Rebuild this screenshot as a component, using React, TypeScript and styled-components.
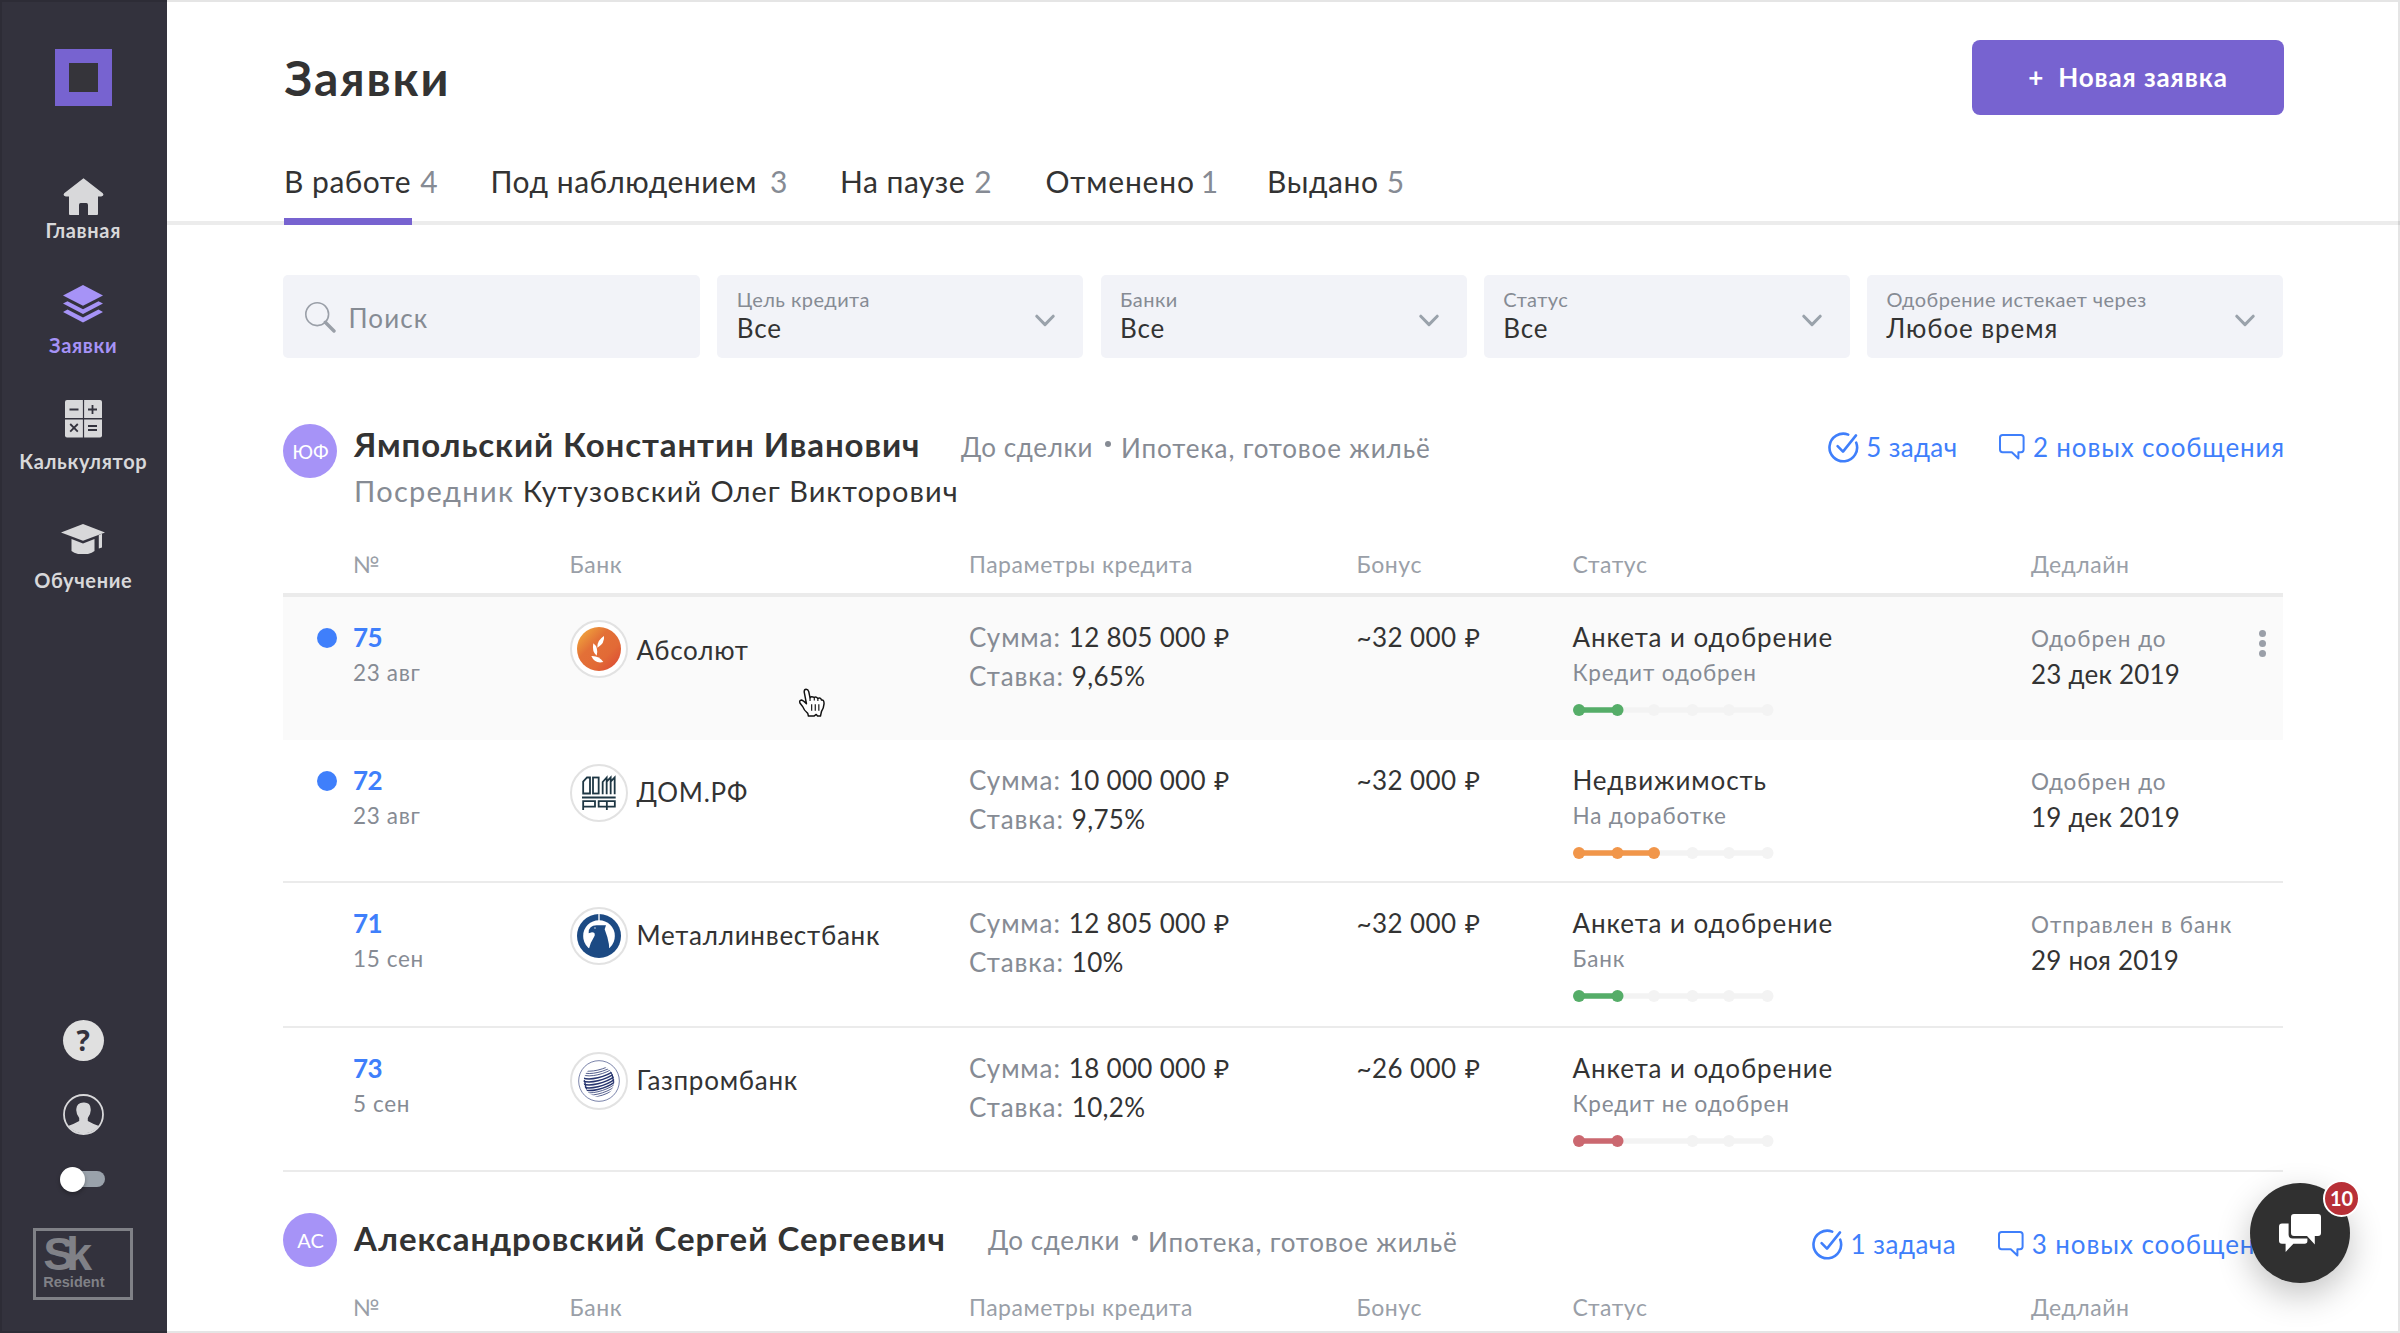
import React from "react";
import styled, { createGlobalStyle } from "styled-components";

const color = {
  ink: "#333333",
  muted: "#868b94",
  faint: "#9a9fa8",
  line: "#ebebeb",
  field: "#f2f3f8",
  violet: "#7763d0",
  lilac: "#a693f7",
  blue: "#3f7ffb",
  side: "#33323d",
  sideIcon: "#d8d8da",
};

const GlobalStyle = createGlobalStyle`
  *, *::before, *::after { box-sizing: border-box; }
  html, body { margin: 0; padding: 0; }
  body {
    background: #fff;
    color: ${color.ink};
    font-family: Lato, "Open Sans", "Noto Sans", sans-serif;
    overflow: hidden;
  }
  svg { display: block; flex: none; }
`;

const Page = styled.div`
  position: relative;
  display: flex;
  width: 2400px;
  height: 1333px;
  overflow: hidden;
  background: #fff;
`;

const Frame = styled.div`
  position: absolute;
  inset: 0;
  border: 2px solid rgba(0, 0, 0, 0.1);
  pointer-events: none;
`;

/* ---------- Sidebar ---------- */

const Sidebar = styled.nav`
  display: flex;
  flex-direction: column;
  align-items: center;
  flex: none;
  width: 166.5px;
  padding: 49px 0 33.5px;
  background: ${color.side};
`;

const Logo = styled.div`
  width: 57px;
  height: 57px;
  border: 14px solid ${color.violet};
  background: #35343a;
  margin-bottom: 28.5px;
`;

const NavItem = styled.a<{ $active?: boolean; $top: number; $gap: number }>`
  display: flex;
  flex-direction: column;
  align-items: center;
  gap: ${(p) => p.$gap}px;
  padding-top: ${(p) => p.$top}px;
  color: ${(p) => (p.$active ? color.lilac : color.sideIcon)};
  font-size: 20px;
  font-weight: 700;
  line-height: 24px;
  letter-spacing: 0.65px;
`;

const SideTools = styled.div`
  display: flex;
  flex-direction: column;
  align-items: center;
  margin-top: auto;
`;

const Help = styled.div`
  display: flex;
  align-items: center;
  justify-content: center;
  width: 41px;
  height: 41px;
  border-radius: 50%;
  background: #e0e0e0;
  color: ${color.side};
  font-family: "Open Sans", sans-serif;
  font-size: 28px;
  font-weight: 700;
  line-height: 41px;
  margin-bottom: 33px;
`;

const Switch = styled.div`
  display: flex;
  align-items: center;
  width: 43px;
  height: 16px;
  margin: 36px -1px 41px 0;
  border-radius: 8px;
  background: #9aa2ab;
`;

const Knob = styled.div`
  flex: none;
  width: 25px;
  height: 25px;
  margin-left: -2px;
  border-radius: 50%;
  background: #fff;
  box-shadow: 0 2px 4px rgba(0, 0, 0, 0.3);
`;

const Resident = styled.div`
  display: flex;
  flex-direction: column;
  width: 100px;
  height: 71.5px;
  padding: 5px 0 0 7px;
  border: 3px solid #808187;
  color: #808187;
  font-family: "Liberation Sans", Arial, sans-serif;
  font-weight: 700;
`;

const ResidentMark = styled.span`
  font-size: 47px;
  line-height: 36px;
  letter-spacing: -8.5px;
`;

const ResidentText = styled.span`
  font-size: 14.5px;
  line-height: 17px;
  margin-top: 2px;
`;

/* ---------- Header ---------- */

const Main = styled.main`
  flex: 1;
  min-width: 0;
`;

const Header = styled.header`
  height: 225px;
  padding: 39.5px 116.5px 0 117px;
  border-bottom: 4px solid #ececec;
`;

const TitleRow = styled.div`
  display: flex;
  justify-content: space-between;
  align-items: flex-start;
  height: 75.5px;
`;

const Title = styled.h1`
  margin: 8px 0 0 1px;
  font-size: 48px;
  font-weight: 700;
  line-height: 60px;
  letter-spacing: 1.9px;
`;

const NewButton = styled.button`
  display: flex;
  align-items: center;
  justify-content: center;
  gap: 14px;
  width: 312px;
  height: 75.5px;
  padding: 0 0 1px 1px;
  border: 0;
  border-radius: 8px;
  background: ${color.violet};
  color: #fff;
  font-family: inherit;
  font-size: 26px;
  font-weight: 700;
  line-height: 32px;
  letter-spacing: 0.9px;
`;

const Tabs = styled.div`
  display: flex;
  margin-top: 48px;
`;

const Tab = styled.a<{ $width: number }>`
  flex: none;
  width: ${(p) => p.$width}px;
  font-size: 30px;
  line-height: 36px;
  white-space: nowrap;
`;

const TabName = styled.span<{ $ls: number }>`
  padding-left: 0.5px;
  letter-spacing: ${(p) => p.$ls}px;
`;

const TabCount = styled.span<{ $gap: number }>`
  margin-left: ${(p) => p.$gap}px;
  color: ${color.muted};
`;

const TabBar = styled.div`
  width: 128px;
  height: 7px;
  margin-top: 19px;
  background: ${color.violet};
`;

/* ---------- Filters ---------- */

const Content = styled.div`
  padding: 50px 117px 0 116.5px;
`;

const Filters = styled.div`
  display: grid;
  grid-template-columns: 417px 366px 366px 366px 1fr;
  column-gap: 17.25px;
`;

const Field = styled.div`
  display: flex;
  align-items: flex-start;
  height: 83px;
  border-radius: 5px;
  background: ${color.field};
`;

const SearchField = styled(Field)`
  gap: 13px;
  padding: 27px 0 0 21.5px;
  color: ${color.muted};
  font-size: 26px;
  line-height: 32px;
  letter-spacing: 1.1px;
`;

const SelectField = styled(Field)`
  justify-content: space-between;
  padding: 12px 28px 0 19.5px;
`;

const SelectLabel = styled.div`
  color: ${color.muted};
  font-size: 20px;
  line-height: 24px;
  letter-spacing: 0.45px;
`;

const SelectValue = styled.div`
  margin-top: 2px;
  font-size: 26px;
  line-height: 31px;
  letter-spacing: 0.9px;
`;

const ChevronBox = styled.div`
  padding-top: 27px;
`;

/* ---------- Client group ---------- */

const Group = styled.section<{ $top: number }>`
  margin-top: ${(p) => p.$top}px;
`;

const GroupHead = styled.div<{ $height: number }>`
  display: flex;
  align-items: flex-start;
  height: ${(p) => p.$height}px;
  white-space: nowrap;
`;

const Avatar = styled.div<{ $top: number }>`
  display: flex;
  align-items: center;
  justify-content: center;
  flex: none;
  width: 54px;
  height: 54px;
  margin: ${(p) => p.$top}px 17px 0 0;
  padding: 0 0 1px 1px;
  border-radius: 50%;
  background: ${color.lilac};
  color: #fff;
  font-size: 20px;
`;

const Person = styled.div<{ $top: number; $width: number }>`
  width: ${(p) => p.$width}px;
  margin-top: ${(p) => p.$top}px;
`;

const PersonName = styled.div<{ $ls: number }>`
  font-size: 33px;
  font-weight: 700;
  line-height: 40px;
  letter-spacing: ${(p) => p.$ls}px;
`;

const Agent = styled.div`
  margin-top: 9px;
  font-size: 29px;
  line-height: 36px;
  letter-spacing: 1px;
`;

const AgentRole = styled.span`
  color: ${color.muted};
  letter-spacing: 1.3px;
`;

const Meta = styled.div<{ $top: number; $ls: number }>`
  margin-top: ${(p) => p.$top}px;
  color: ${color.muted};
  font-size: 26px;
  line-height: 32px;
  letter-spacing: ${(p) => p.$ls}px;
`;

const Bullet = styled.div<{ $top: number }>`
  width: 6px;
  height: 6px;
  margin: ${(p) => p.$top}px 10px 0 12px;
  border-radius: 50%;
  background: ${color.muted};
`;

const Links = styled.div<{ $top: number }>`
  display: flex;
  align-items: flex-start;
  gap: 41.5px;
  margin: ${(p) => p.$top}px -2px 0 auto;
`;

const LinkItem = styled.a<{ $ls: number; $gap: number }>`
  display: flex;
  align-items: center;
  gap: ${(p) => p.$gap}px;
  color: ${color.blue};
  font-size: 26px;
  line-height: 32px;
  letter-spacing: ${(p) => p.$ls}px;
`;

/* ---------- Table ---------- */

const columns = "70px 216.5px 399.5px 387.5px 216px 458.5px 1fr";

const HeadRow = styled.div`
  display: grid;
  grid-template-columns: ${columns};
  height: 48px;
  border-bottom: 4px solid ${color.line};
  color: ${color.faint};
  font-size: 23px;
  line-height: 31px;
  letter-spacing: 0.55px;
`;

const Row = styled.div<{ $hover?: boolean; $height: number }>`
  display: grid;
  grid-template-columns: ${columns};
  height: ${(p) => p.$height}px;
  padding-top: 24px;
  border-bottom: ${(p) => (p.$hover ? "0" : `2px solid ${color.line}`)};
  background: ${(p) => (p.$hover ? "#fafafa" : "#fff")};
  white-space: nowrap;
`;

const Unread = styled.div`
  width: 20px;
  height: 20px;
  margin: 7px 0 0 33.5px;
  border-radius: 50%;
  background: ${color.blue};
`;

const Primary = styled.div<{ $ls?: number; $top?: number }>`
  margin-top: ${(p) => p.$top ?? 0}px;
  font-size: 26px;
  line-height: 32px;
  letter-spacing: ${(p) => p.$ls ?? 0.9}px;
`;

const Secondary = styled.div<{ $top?: number; $ls?: number }>`
  margin-top: ${(p) => p.$top ?? 4.5}px;
  color: ${color.muted};
  font-size: 22.5px;
  line-height: 30px;
  letter-spacing: ${(p) => p.$ls ?? 0.85}px;
`;

const Num = styled(Primary)`
  color: ${color.blue};
  font-weight: 700;
  letter-spacing: -0.5px;
`;

const Param = styled(Primary)`
  display: flex;
  gap: 8px;
  margin-bottom: 6.5px;
`;

const ParamLabel = styled.span`
  color: ${color.muted};
`;

const ParamValue = styled.span`
  letter-spacing: 0.3px;
`;

const Ruble = styled.span`
  margin-left: 1.5px;
`;

const Bank = styled.div`
  display: flex;
  align-items: flex-start;
  gap: 9px;
`;

const BankLogo = styled.div<{ $top: number }>`
  flex: none;
  width: 58px;
  height: 58px;
  margin-top: ${(p) => p.$top}px;
  border: 2px solid #e2e2e2;
  border-radius: 50%;
  background: #fff;
`;

const Progress = styled.div`
  margin-top: 16px;
`;

const Deadline = styled.div`
  display: flex;
  justify-content: space-between;
  align-items: flex-start;
`;

const Kebab = styled.div`
  display: flex;
  flex-direction: column;
  gap: 3px;
  margin: 8.5px 17.5px 0 0;
`;

const KebabDot = styled.div`
  width: 7px;
  height: 7px;
  border-radius: 50%;
  background: ${color.faint};
`;

/* ---------- Floating parts ---------- */

const ChatButton = styled.div`
  position: absolute;
  left: 2250px;
  top: 1183px;
  display: flex;
  align-items: center;
  justify-content: center;
  width: 100px;
  height: 100px;
  border-radius: 50%;
  background: #303030;
  box-shadow: 0 12px 34px rgba(0, 0, 0, 0.24);
`;

const ChatBadge = styled.div`
  position: absolute;
  top: -3.5px;
  right: -10px;
  display: flex;
  align-items: center;
  justify-content: center;
  width: 37px;
  height: 37px;
  border: 2px solid #fff;
  border-radius: 50%;
  background: #b83037;
  color: #fff;
  font-size: 20px;
  font-weight: 700;
`;

const Pointer = styled.div`
  position: absolute;
  left: 798px;
  top: 688px;
`;

/* ---------- Icons ---------- */

const HomeIcon = () => (
  <svg width="41" height="37.5" viewBox="0 0 41 37.5" fill="currentColor">
    <path d="M20.5 0.3 39.8 15.2Q41.6 18 38.2 18.4H35V35.6Q35 37.5 33 37.5H25V27Q25 25 23.4 25H17.6Q16 25 16 27V37.5H8Q6 37.5 6 35.6V18.4H2.8Q-.6 18 1.2 15.2Z" />
  </svg>
);

const LayersIcon = () => (
  <svg width="40" height="37.5" viewBox="0 0 40 37.5" fill="currentColor">
    <path d="M20 0 40 10.4 20 20.8 0 10.4Z" />
    <path d="M0 18.6 4.5 16.2 20 24.2 35.5 16.2 40 18.6 20 29Z" />
    <path d="M0 27 4.5 24.6 20 32.6 35.5 24.6 40 27 20 37.4Z" />
  </svg>
);

const CalcIcon = () => (
  <svg width="37" height="37.5" viewBox="0 0 37 37.5">
    <g fill="currentColor">
      <path d="M2 0H17.9V18H0V2Q0 0 2 0Z" />
      <path d="M19.1 0H35Q37 0 37 2V18H19.1Z" />
      <path d="M0 19.4H17.9V37.5H2Q0 37.5 0 35.5Z" />
      <path d="M19.1 19.4H37V35.5Q37 37.5 35 37.5H19.1Z" />
    </g>
    <path
      d="M4.5 9.5H13.5M23 9.5H32M27.5 5V14M5.2 24 12.8 31.6M12.8 24 5.2 31.6M23 26H32M23 30H32"
      stroke={color.side}
      strokeWidth="1.8"
      fill="none"
    />
  </svg>
);

const CapIcon = () => (
  <svg width="44" height="30.5" viewBox="0 0 44 30.5" fill="currentColor">
    <path d="M22 0 44 8.4 22 16.8 0 8.4Z" />
    <path d="M10.5 15 22 19.4 33.5 15V27Q30 30.4 22 30.4T10.5 27Z" />
    <path d="M37.8 11 41 9.8V23.4L37.8 24.4Z" />
  </svg>
);

const UserIcon = () => (
  <svg width="41" height="41" viewBox="0 0 41 41">
    <defs>
      <clipPath id="user-clip">
        <circle cx="20.5" cy="20.5" r="19" />
      </clipPath>
    </defs>
    <circle cx="20.5" cy="20.5" r="19.5" fill="none" stroke={color.sideIcon} strokeWidth="1.8" />
    <path
      clipPath="url(#user-clip)"
      fill={color.sideIcon}
      d="M20.5 8.4Q27.4 8 27.6 14.5 28.4 19 24.8 24V27Q30 30 36 32L34 41H7L5 32Q11 30 16.2 27V24Q12.6 19 13.4 14.5 13.6 9 20.5 8.4Z"
    />
  </svg>
);

const SearchIcon = () => (
  <svg width="31" height="31" viewBox="0 0 31 31" fill="none" stroke={color.faint}>
    <circle cx="12.2" cy="12.2" r="11.4" strokeWidth="1.6" />
    <path d="M20.3 20.3 29 29" strokeWidth="3.4" strokeLinecap="round" />
  </svg>
);

const Chevron = () => (
  <svg width="20" height="14" viewBox="0 0 20 14" fill="none">
    <path d="M1.8 2.2 10 10.6 18.2 2.2" stroke="#9aa2ab" strokeWidth="3" strokeLinecap="round" strokeLinejoin="round" />
  </svg>
);

const TaskIcon = () => (
  <svg width="31" height="31" viewBox="0 0 31 31" fill="none" stroke={color.blue} strokeWidth="2.6" strokeLinecap="round" strokeLinejoin="round">
    <path d="M20.2 2.6A13.8 13.8 0 1 0 28.2 10.6" />
    <path d="M9.6 14.2 15 19.6 28 3.4" />
  </svg>
);

const MessageIcon = () => (
  <svg width="26" height="26" viewBox="0 0 26 26" fill="none" stroke={color.blue} strokeWidth="2" strokeLinejoin="round">
    <path d="M3.6 1H22Q24.6 1 24.6 3.6V15.6Q24.6 18.2 22 18.2H19.4V24.4L12.8 18.2H3.6Q1 18.2 1 15.6V3.6Q1 1 3.6 1Z" />
  </svg>
);

const ChatIcon = () => (
  <svg width="42" height="38" viewBox="0 0 42 38" fill="#fff">
    <path d="M3 9.6H9.6V20.4Q9.6 24.4 13.6 24.4H28.4V27Q28.4 29.8 25.6 29.8H14.4L6.6 38V29.8H3Q0 29.8 0 26.8V12.6Q0 9.6 3 9.6Z" />
    <path d="M15 0H39Q42 0 42 3V19Q42 22 39 22H35.8V30.4L28 22H15Q12 22 12 19V3Q12 0 15 0Z" />
  </svg>
);

const HandIcon = () => (
  <svg width="28" height="30" viewBox="-2 -2 84 92">
    <path
      d="M16 10Q16 2 22 2T30 9L34 28Q37 22 47 27 52 23 58 30 66 26 69 35 77 33 77 46 76 60 69 70L66 84H57L53 79 46 84H29L27 76Q15 66 12 56L3 44Q0 36 8 35 13 36 23 46Z"
      fill="#fff"
      stroke="#111"
      strokeWidth="4.500"
      strokeLinejoin="round"
    />
    <path d="M39 48V68M50 48V68M61 48V68M34 28V38M47 27V36M58 30V38" stroke="#111" strokeWidth="3.500" />
  </svg>
);

/* ---------- Bank logos ---------- */

const AbsolutLogo = () => (
  <svg width="54" height="54" viewBox="6 6 162 162">
    <defs>
      <linearGradient id="absolut" x1="0.1" y1="0.1" x2="0.9" y2="0.9">
        <stop offset="0" stopColor="#f0a33c" />
        <stop offset="0.35" stopColor="#e37037" />
        <stop offset="0.7" stopColor="#e26a36" />
        <stop offset="1" stopColor="#dd4f35" />
      </linearGradient>
    </defs>
    <circle cx="87" cy="87" r="66" fill="url(#absolut)" />
    <g fill="#fff">
      <path d="M102 48Q105 70 82 83 80 62 102 48Z" />
      <path d="M70 70Q86 82 80 107 65 96 70 70Z" />
      <path d="M64 108Q88 107 100 126 74 132 64 108Z" />
    </g>
  </svg>
);

const DomLogo = () => (
  <svg width="54" height="54" viewBox="6 6 162 162" fill="none" stroke="#1e3744" strokeWidth="5.4">
    <path d="M39.5 88.5V53L51 40.5H60V88.5Z" />
    <rect x="69" y="40.5" width="17" height="48" />
    <path d="M98 91V54L110 40.5V91M110 53 122 40.5V91M122 53 134 40.5V91" />
    <path d="M36 100.5H137" strokeWidth="5.600" />
    <path d="M39.5 138V111.5H75V128H39.5" />
    <path d="M86 111.5H134.5V128H86ZM110.5 109V138" />
  </svg>
);

const MetallLogo = () => (
  <svg width="54" height="54" viewBox="6 6 162 162">
    <circle cx="87" cy="87" r="66" fill="#1c4a83" />
    <circle cx="87" cy="87" r="47.5" fill="#fff" />
    <rect x="85" y="18" width="4" height="24" fill="#fff" />
    <path
      d="M62 61Q68 55 80 55H108L104 67 112 90Q118 112 118 128L87 140 56 128Q60 108 74 86 76 76 66 76L56 79Q55 67 62 61Z"
      fill="#1c4a83"
    />
    <circle cx="75" cy="63" r="2" fill="#fff" />
  </svg>
);

const gazpromBands = [-40, -33, -26, -17, -8, 1, 10, 18, 25, 32, 39];

const GazpromLogo = () => (
  <svg width="54" height="54" viewBox="6 6 162 162">
    <defs>
      <clipPath id="gaz-clip">
        <circle cx="87" cy="88" r="46" />
      </clipPath>
    </defs>
    <circle cx="87" cy="87" r="61" fill="none" stroke="#38467f" strokeWidth="2" />
    <g clipPath="url(#gaz-clip)" fill="none" stroke="#27356f">
      {gazpromBands.map((dy, i) => (
        <path
          key={dy}
          d={`M38 ${94 + dy}C58 ${104 + dy} 108 ${92 + dy} 134 ${72 + dy}`}
          strokeWidth={i < 3 || i > 7 ? 2.4 : 4.6}
        />
      ))}
      <path d="M42 84C48 94 44 100 50 112M122 58C130 68 126 78 132 90" strokeWidth="4" />
    </g>
  </svg>
);

/* ---------- Data ---------- */

const navItems = [
  { label: "Главная", icon: <HomeIcon />, top: 43, gap: 3 },
  { label: "Заявки", icon: <LayersIcon />, top: 43, gap: 10, active: true },
  { label: "Калькулятор", icon: <CalcIcon />, top: 43.5, gap: 11.5 },
  { label: "Обучение", icon: <CapIcon />, top: 50.5, gap: 14 },
];

const tabs = [
  { name: "В работе", count: 4, width: 206.5, ls: 0.5, gap: 9, active: true },
  { name: "Под наблюдением", count: 3, width: 349.5, ls: 0.5, gap: 13 },
  { name: "На паузе", count: 2, width: 205.5, ls: 0.5, gap: 9 },
  { name: "Отменено", count: 1, width: 221.5, ls: 0.8, gap: 6 },
  { name: "Выдано", count: 5, width: 200, ls: 0.6, gap: 8 },
];

const filters = [
  { label: "Цель кредита", value: "Все" },
  { label: "Банки", value: "Все" },
  { label: "Статус", value: "Все" },
  { label: "Одобрение истекает через", value: "Любое время" },
];

type Application = {
  id: number;
  date: string;
  unread?: boolean;
  hover?: boolean;
  height: number;
  bank: string;
  logo: React.ReactNode;
  sum: string;
  rate: string;
  bonus: string;
  status: string;
  detail: string;
  tone: string;
  done: number;
  skip?: number;
  deadline?: [string, string];
};

const green = "#55ad68";

const applications: Application[] = [
  { id: 75, date: "23 авг", unread: true, hover: true, height: 143, bank: "Абсолют", logo: <AbsolutLogo />, sum: "12 805 000", rate: "9,65%", bonus: "~32 000", status: "Анкета и одобрение", detail: "Кредит одобрен", tone: green, done: 2, deadline: ["Одобрен до", "23 дек 2019"] },
  { id: 72, date: "23 авг", unread: true, height: 143, bank: "ДОМ.РФ", logo: <DomLogo />, sum: "10 000 000", rate: "9,75%", bonus: "~32 000", status: "Недвижимость", detail: "На доработке", tone: "#f1964a", done: 3, deadline: ["Одобрен до", "19 дек 2019"] },
  { id: 71, date: "15 сен", height: 145, bank: "Металлинвестбанк", logo: <MetallLogo />, sum: "12 805 000", rate: "10%", bonus: "~32 000", status: "Анкета и одобрение", detail: "Банк", tone: green, done: 2, deadline: ["Отправлен в банк", "29 ноя 2019"] },
  { id: 73, date: "5 сен", height: 144, bank: "Газпромбанк", logo: <GazpromLogo />, sum: "18 000 000", rate: "10,2%", bonus: "~26 000", status: "Анкета и одобрение", detail: "Кредит не одобрен", tone: "#cb6870", done: 2, skip: 2 },
];

const headings = ["", "№", "Банк", "Параметры кредита", "Бонус", "Статус", "Дедлайн"];
const steps = [6, 44.5, 81, 119.5, 156, 194.5];

const ProgressTrack = ({ tone, done, skip }: { tone: string; done: number; skip?: number }) => (
  <Progress>
    <svg width="201" height="12" viewBox="0 0 201 12">
      <path d="M6 6H194.5" stroke="#f3f3f3" strokeWidth="5.5" />
      {steps.map((x, i) => (i < done || i === skip ? null : <circle key={x} cx={x} cy="6" r="6" fill="#f3f3f3" />))}
      <path d={`M6 6H${steps[done - 1]}`} stroke={tone} strokeWidth="5.5" />
      {steps.slice(0, done).map((x) => (
        <circle key={x} cx={x} cy="6" r="6" fill={tone} />
      ))}
    </svg>
  </Progress>
);

const TableHead = () => (
  <HeadRow>
    {headings.map((h) => (
      <div key={h}>{h}</div>
    ))}
  </HeadRow>
);

const ApplicationRow = ({ item }: { item: Application }) => (
  <Row $hover={item.hover} $height={item.height}>
    <div>{item.unread && <Unread />}</div>
    <div>
      <Num>{item.id}</Num>
      <Secondary $ls={0.65}>{item.date}</Secondary>
    </div>
    <Bank>
      <BankLogo $top={item.hover ? -1 : 0}>{item.logo}</BankLogo>
      <Primary $top={item.hover ? 13 : 12} $ls={0.75}>
        {item.bank}
      </Primary>
    </Bank>
    <div>
      <Param>
        <ParamLabel>Сумма:</ParamLabel>
        <ParamValue>
          {item.sum} <Ruble>₽</Ruble>
        </ParamValue>
      </Param>
      <Param>
        <ParamLabel>Ставка:</ParamLabel>
        <ParamValue>{item.rate}</ParamValue>
      </Param>
    </div>
    <Primary $ls={0.4}>
      {item.bonus} <Ruble>₽</Ruble>
    </Primary>
    <div>
      <Primary>{item.status}</Primary>
      <Secondary>{item.detail}</Secondary>
      <ProgressTrack tone={item.tone} done={item.done} skip={item.skip} />
    </div>
    <Deadline>
      {item.deadline && (
        <div>
          <Secondary $top={2.5} $ls={0.95}>
            {item.deadline[0]}
          </Secondary>
          <Primary $top={4} $ls={0.2}>
            {item.deadline[1]}
          </Primary>
        </div>
      )}
      {item.hover && (
        <Kebab>
          <KebabDot />
          <KebabDot />
          <KebabDot />
        </Kebab>
      )}
    </Deadline>
  </Row>
);

export default function App() {
  return (
    <Page>
      <GlobalStyle />
      <Sidebar>
        <Logo />
        {navItems.map((n) => (
          <NavItem key={n.label} $top={n.top} $gap={n.gap} $active={n.active}>
            {n.icon}
            {n.label}
          </NavItem>
        ))}
        <SideTools>
          <Help>?</Help>
          <UserIcon />
          <Switch>
            <Knob />
          </Switch>
          <Resident>
            <ResidentMark>Sk</ResidentMark>
            <ResidentText>Resident</ResidentText>
          </Resident>
        </SideTools>
      </Sidebar>

      <Main>
        <Header>
          <TitleRow>
            <Title>Заявки</Title>
            <NewButton>
              <span>+</span>
              <span>Новая заявка</span>
            </NewButton>
          </TitleRow>
          <Tabs>
            {tabs.map((t) => (
              <Tab key={t.name} $width={t.width}>
                <TabName $ls={t.ls}>{t.name}</TabName>
                <TabCount $gap={t.gap}>{t.count}</TabCount>
                {t.active && <TabBar />}
              </Tab>
            ))}
          </Tabs>
        </Header>

        <Content>
          <Filters>
            <SearchField>
              <SearchIcon />
              <span>Поиск</span>
            </SearchField>
            {filters.map((f) => (
              <SelectField key={f.label}>
                <div>
                  <SelectLabel>{f.label}</SelectLabel>
                  <SelectValue>{f.value}</SelectValue>
                </div>
                <ChevronBox>
                  <Chevron />
                </ChevronBox>
              </SelectField>
            ))}
          </Filters>

          <Group $top={65}>
            <GroupHead $height={126}>
              <Avatar $top={1}>ЮФ</Avatar>
              <Person $top={1} $width={607}>
                <PersonName $ls={0.9}>Ямпольский Константин Иванович</PersonName>
                <Agent>
                  <AgentRole>Посредник</AgentRole> Кутузовский Олег Викторович
                </Agent>
              </Person>
              <Meta $top={8} $ls={0.6}>До сделки</Meta>
              <Bullet $top={18} />
              <Meta $top={8.5} $ls={0.87}>Ипотека, готовое жильё</Meta>
              <Links $top={8}>
                <LinkItem $ls={0.35} $gap={7.5}>
                  <TaskIcon />5 задач
                </LinkItem>
                <LinkItem $ls={0.85} $gap={8}>
                  <MessageIcon />2 новых сообщения
                </LinkItem>
              </Links>
            </GroupHead>
            <TableHead />
            {applications.map((item) => (
              <ApplicationRow key={item.id} item={item} />
            ))}
          </Group>

          <Group $top={41}>
            <GroupHead $height={79}>
              <Avatar $top={0}>АС</Avatar>
              <Person $top={5} $width={634}>
                <PersonName $ls={0.98}>Александровский Сергей Сергеевич</PersonName>
              </Person>
              <Meta $top={11} $ls={0.6}>До сделки</Meta>
              <Bullet $top={22} />
              <Meta $top={13} $ls={0.87}>Ипотека, готовое жильё</Meta>
              <Links $top={15}>
                <LinkItem $ls={0.5} $gap={7.5}>
                  <TaskIcon />1 задача
                </LinkItem>
                <LinkItem $ls={0.92} $gap={8}>
                  <MessageIcon />3 новых сообщения
                </LinkItem>
              </Links>
            </GroupHead>
            <TableHead />
          </Group>
        </Content>
      </Main>

      <Pointer>
        <HandIcon />
      </Pointer>
      <ChatButton>
        <ChatIcon />
        <ChatBadge>10</ChatBadge>
      </ChatButton>
      <Frame />
    </Page>
  );
}
